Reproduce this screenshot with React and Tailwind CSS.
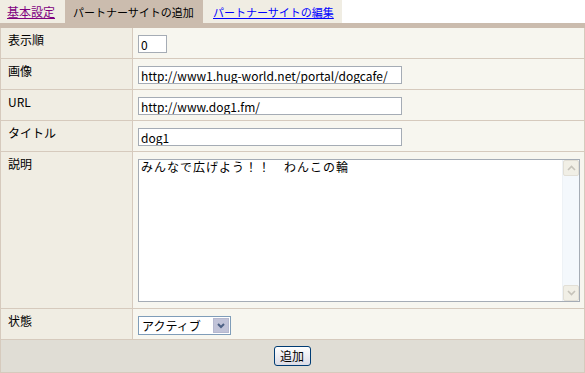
import React from "react";

const font = { fontFamily: '"MS UI Gothic", "Noto Sans CJK JP", sans-serif' };

const Row = ({ label, children, h = "h-[31px]" }) => (
  <div className={`flex ${h} border-b border-[#d6cabd]`}>
    <div className="w-[132px] shrink-0 bg-[#f0ede3] border-r border-[#d6cabd] pl-[7px] pt-[5px] text-[12px] leading-[14px] text-black">
      {label}
    </div>
    <div className="flex-1 bg-[#f7f6ef] pl-[5px] pt-[7px]">{children}</div>
  </div>
);

const Input = ({ value, w }) => (
  <input
    readOnly
    value={value}
    className={`${w} h-[18px] border border-[#a5acb5] bg-white px-[2px] text-[12px] leading-[14px] text-black outline-none`}
    style={font}
  />
);

const App = () => {
  return (
    <div className="w-[585px] h-[373px] bg-white text-[12px]" style={font}>
      <div className="flex h-[23px] whitespace-nowrap text-[11px] leading-[14px]">
        <div className="w-[65px] bg-[#f0ede3] flex items-center pl-[7px]">
          <a className="text-[#800080] underline text-[12px]">基本設定</a>
        </div>
        <div className="w-[138px] bg-[#cbbcae] flex items-center pl-[8px] text-black">
          パートナーサイトの追加
        </div>
        <div className="w-[139px] bg-[#f0ede3] flex items-center pl-[10px]">
          <a className="text-[#0000ff] underline">パートナーサイトの編集</a>
        </div>
      </div>
      <div className="h-[5px] bg-[#cbbcae]" />
      <div className="border-x border-[#d6cabd] w-[585px]">
        <Row label="表示順">
          <Input value="0" w="w-[29px]" />
        </Row>
        <Row label="画像">
          <Input value="http://www1.hug-world.net/portal/dogcafe/" w="w-[264px]" />
        </Row>
        <Row label="URL">
          <Input value="http://www.dog1.fm/" w="w-[264px]" />
        </Row>
        <Row label="タイトル">
          <Input value="dog1" w="w-[264px]" />
        </Row>
        <Row label="説明" h="h-[157px]">
          <div className="flex w-[442px] h-[143px] border border-[#a5acb5] bg-white">
            <div className="flex-1 px-[2px] pt-0 text-[12px] leading-[14px] text-black tracking-[1px]">
              みんなで広げよう！！　わんこの輪
            </div>
            <div className="w-[17px] bg-[#f4f8fc] flex flex-col justify-between border-l border-[#eef2f6]">
              <div className="h-[16px] w-[16px] bg-[#f1efe6] border border-[#e2dfd6] rounded-[2px] flex items-center justify-center">
                <svg width="9" height="6" viewBox="0 0 9 6"><path d="M1 5 L4.5 1.5 L8 5" stroke="#c6c3ba" strokeWidth="1.6" fill="none" /></svg>
              </div>
              <div className="h-[16px] w-[16px] bg-[#f1efe6] border border-[#e2dfd6] rounded-[2px] flex items-center justify-center">
                <svg width="9" height="6" viewBox="0 0 9 6"><path d="M1 1 L4.5 4.5 L8 1" stroke="#c6c3ba" strokeWidth="1.6" fill="none" /></svg>
              </div>
            </div>
          </div>
        </Row>
        <Row label="状態">
          <div className="flex w-[93px] h-[19px] border border-[#7f9db9] bg-white">
            <div className="flex-1 pl-[3px] text-[12px] leading-[17px] text-black">アクティブ</div>
            <div className="w-[16px] m-[1px] bg-[#c1c3d8] border border-[#b5b8cf] flex items-center justify-center">
              <svg width="8" height="6" viewBox="0 0 8 6"><path d="M1 1 L4 4 L7 1" stroke="#4d6185" strokeWidth="2" fill="none" /></svg>
            </div>
          </div>
        </Row>
        <div className="h-[33px] bg-[#e0ddd5] border-b border-[#d6cabd] flex items-center justify-center">
          <button className="w-[37px] h-[20px] rounded-[3px] border border-[#003c74] bg-gradient-to-b from-white to-[#dcdce6] text-[12px] text-black leading-none mr-[1px]" style={font}>
            追加
          </button>
        </div>
      </div>
    </div>
  );
};

export default App;
